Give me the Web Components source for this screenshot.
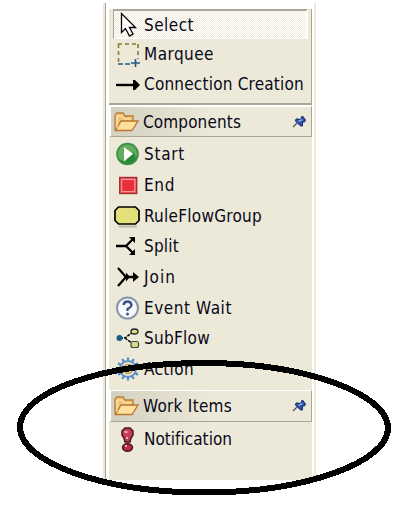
<!DOCTYPE html>
<html lang="en"><head><meta charset="utf-8"><title>Palette</title>
<style>body{margin:0;background:#fff;width:406px;height:505px;overflow:hidden;font-family:"DejaVu Sans Condensed","DejaVu Sans",sans-serif}</style></head>
<body>
<palette-view>
  <palette-group slot="tools">
    <palette-item icon="cursor" width="48" selected>Select</palette-item>
    <palette-item icon="marquee" width="68">Marquee</palette-item>
    <palette-item icon="arrow" width="158">Connection Creation</palette-item>
  </palette-group>
  <palette-drawer label="Components" width="96">
    <palette-item icon="start" width="39">Start</palette-item>
    <palette-item icon="end" width="29">End</palette-item>
    <palette-item icon="group" width="116">RuleFlowGroup</palette-item>
    <palette-item icon="split" width="33">Split</palette-item>
    <palette-item icon="join" width="30">Join</palette-item>
    <palette-item icon="wait" width="86">Event Wait</palette-item>
    <palette-item icon="subflow" width="64">SubFlow</palette-item>
    <palette-item icon="action" width="48">Action</palette-item>
  </palette-drawer>
  <palette-drawer label="Work Items" width="87" last>
    <palette-item icon="notify" width="86">Notification</palette-item>
  </palette-drawer>
  <callout-ring slot="callout"></callout-ring>
</palette-view>
<script>
const gear = Array.from({length:12},(_,i)=>`<path d="M12 0.5V4" transform="rotate(${i*30} 12 12)" stroke="#5a86c0" stroke-width="2.2"/>`).join('');
const folder = '<path d="M2 20V5l2-2h6l2 3h8v5" fill="#f1c479" stroke="#b87c34" stroke-width="1.3"/><path d="M2.5 20.5 8 11h17l-6 9.5z" fill="#ffe09a" stroke="#b87630" stroke-width="1.3"/><path d="M4 18V6h5l2 3h7" fill="none" stroke="#ffe9bd"/>';
const ICONS = {
 cursor:'<path d="M5.500 0.500v19l4-4 4 7.500 3.500-2-3.500-6.500h6z" fill="#fff" stroke="#000" stroke-width="1.300"/>',
 marquee:'<path d="M2 2h21" stroke="#8b7b35" stroke-width="1.6" stroke-dasharray="4 3"/><path d="M2.500 2v20M22 2v15" stroke="#8b7b35" stroke-width="1.6" stroke-dasharray="4 3"/><path d="M2 22h13" stroke="#225c86" stroke-width="1.7" stroke-dasharray="5 2"/><path d="M15 21h9M19.500 17v8" stroke="#225c86" stroke-width="1.7"/>',
 arrow:'<path d="M0 13h19" stroke="#000" stroke-width="2.4"/><path d="M17 8v10h2l5-5-5-5z"/>',
 start:'<circle cx="11.500" cy="12" r="11.300" fill="#3c8f43"/><circle cx="11.500" cy="12" r="9.500" fill="#63ad5e"/><path d="M3 17A10 10 0 0 0 20 17L18 10 9 20z" fill="#28863a"/><path d="M8 5v14l9-7z" fill="#fff"/>',
 end:'<rect x="3.700" y="4.500" width="17" height="16" fill="#ef5962" stroke="#a62f32" stroke-width="1.4"/><rect x="5.700" y="6.500" width="13" height="12" fill="#e92f3b" stroke="#ff9a99"/>',
 group:'<path d="M3 22.500h18" stroke="#bdbaa8" stroke-width="2"/><path d="M2.500 3h17l3.500 3.500v10l-3.500 3.500h-17L-1 16.500v-10z" fill="#e3e07a" stroke="#000" stroke-width="1.7"/>',
 split:'<path d="M0 12h11M10 12l7-7M10 12l7 7" fill="none" stroke="#000" stroke-width="2.300"/><path d="M13 3h6v6M13 21h6v-6" fill="#000"/>',
 join:'<path d="M2 3l8 9-8 9M8 12h10" fill="none" stroke="#000" stroke-width="2.300"/><path d="M10 7.500l4 4.500-4 4.500M17 7v10l6-5z"/>',
 wait:'<circle cx="11.500" cy="12" r="10.500" fill="#f8fafa" stroke="#8796ac" stroke-width="2"/><path d="M7.500 9Q8 5.500 11.500 5.500T15.500 9Q15.500 11 11.500 13v2" fill="none" stroke="#3c527f" stroke-width="2.300"/><circle cx="11.500" cy="18" r="1.500" fill="#3c527f"/>',
 subflow:'<path d="M4 12h5l8-6M9 12l8 6" stroke="#000" stroke-width="1.500" fill="none" stroke-dasharray="3 1"/><circle cx="3.500" cy="12" r="3" fill="#175c8c"/><ellipse cx="18.500" cy="5.500" rx="3.500" ry="2.500" fill="#d8df83" stroke="#222" stroke-width="1.300"/><rect x="15" y="15.500" width="7.500" height="6" rx="2" fill="#d8df83" stroke="#444" stroke-width="1.200"/>',
 action:gear+'<circle cx="12" cy="12" r="8" fill="#e9e6d5" stroke="#6390c8" stroke-width="2"/><circle cx="12" cy="12" r="4.800" fill="#dac66d" stroke="#b29a48"/>',
 notify:'<path d="M9 1h5l3 3v4l-2 3-1 4h-5l-1-4-2-3V4z" fill="#c93c55" stroke="#421824" stroke-width="1.500"/><ellipse cx="11.500" cy="20.500" rx="5" ry="3.700" fill="#bc2842" stroke="#421824" stroke-width="1.500"/><path d="M8.500 5h3M10 11h2M9 19h2" stroke="#f5a7ad" stroke-width="2"/>',
 folder, 
 pin:'<path d="M1 12l4-4" stroke="#555" stroke-width="1.200"/><path d="M4 4l2.500 0 2 1 1-3 1-1 3 4-1 2-2 0 0 4-2 0-5-5z" fill="#2b50a8" stroke="#162b70"/><path d="M6.500 6.500l4-2" stroke="#83a6dd" stroke-width="1.500"/>'
};
const svg=(n,w=24,h=24)=>`<svg width="${w}" height="${h}" viewBox="0 0 ${w} ${h}" overflow="visible">${ICONS[n]}</svg>`;

/* One line of text, tracked so that it fills its given width. */
customElements.define('tracked-text', class extends HTMLElement{
 connectedCallback(){
  this.attachShadow({mode:'open'}).innerHTML='<style>:host{display:block;white-space:nowrap;font-size:17px;line-height:20px;color:#080818}span{display:inline-block}</style><span><slot></slot></span>';
  const s=this.shadowRoot.querySelector('span'), n=this.textContent.length;
  s.style.letterSpacing=((+this.getAttribute('width')+2-s.getBoundingClientRect().width)/n)+'px';
 }});
customElements.define('palette-item', class extends HTMLElement{
 connectedCallback(){
  const t=this.textContent;
  this.attachShadow({mode:'open'}).innerHTML=`<style>:host{display:flex;align-items:center;height:var(--row,30px);box-sizing:border-box;padding-left:3px}
  :host([selected]){border:solid #aaa696;border-width:2px 0 0 1px;border-right:2px solid #fff;border-bottom:1px solid #fff;margin-right:3px;padding-left:2px;background:repeating-conic-gradient(#fffefa 0 25%,#f0ede0 0 50%) 0 0/2px 2px}
  svg{flex:none;margin-right:4px}</style>${svg(this.getAttribute('icon'))}<tracked-text width="${this.getAttribute('width')}">${t}</tracked-text>`;
 }});
customElements.define('palette-group', class extends HTMLElement{
 connectedCallback(){this.attachShadow({mode:'open'}).innerHTML='<style>:host{display:block;height:94px;box-sizing:content-box;border-right:1px solid #aaa696;border-bottom:2px solid #aaa696;padding-left:4px;background:#ece9d8}</style><slot></slot>'}});
customElements.define('palette-drawer', class extends HTMLElement{
 connectedCallback(){this.attachShadow({mode:'open'}).innerHTML=`<style>:host{display:block}header{display:flex;align-items:center;height:32px;box-sizing:border-box;border-top:2px solid #fff;border-left:2px solid #fff;border-right:1px solid #aaa696;border-bottom:1px solid #aaa696;background:linear-gradient(90deg,#d4d0bf,#ece9d8 50%);padding:0 5px 0 2px}header svg:first-child{margin-right:4px}header tracked-text{flex:1}
  .items{--row:30.7px;padding:2px 0 5px 4px}:host([last]) .items{padding-top:2px}:host([last]) header{border-top-width:1px}</style><header>${svg('folder',26,24)}<tracked-text width="${this.getAttribute('width')}">${this.getAttribute('label')}</tracked-text>${svg('pin',14,14)}</header><div class="items"><slot></slot></div>`}});
customElements.define('callout-ring', class extends HTMLElement{
 connectedCallback(){this.attachShadow({mode:'open'}).innerHTML='<style>:host{position:absolute;inset:0;pointer-events:none}</style><svg width="406" height="505"><path d="M204 363C306 363 388 394 388 428S306 492.500 204 492.500 20 462 20 427 102 363 204 363Z" fill="none" stroke="#000" stroke-width="6" shape-rendering="crispEdges"/></svg>'}});
customElements.define('palette-view', class extends HTMLElement{
 connectedCallback(){this.attachShadow({mode:'open'}).innerHTML=`<style>:host{display:block;position:relative;height:505px;padding:3px 0 0 103px;box-sizing:border-box}
  .frame{width:213px;height:477px;box-sizing:border-box;border-left:2px solid #ece9d8;border-right:2px solid #ece9d8;display:flex}
  .edge{width:1px;background:#aaa696;margin-right:3px}.body{width:203px;margin-top:6px;background:#ece9d8}</style>
  <div class="frame"><div class="edge"></div><div class="body"><slot name="tools"></slot><slot></slot></div></div><slot name="callout"></slot>`}});
</script></body></html>
